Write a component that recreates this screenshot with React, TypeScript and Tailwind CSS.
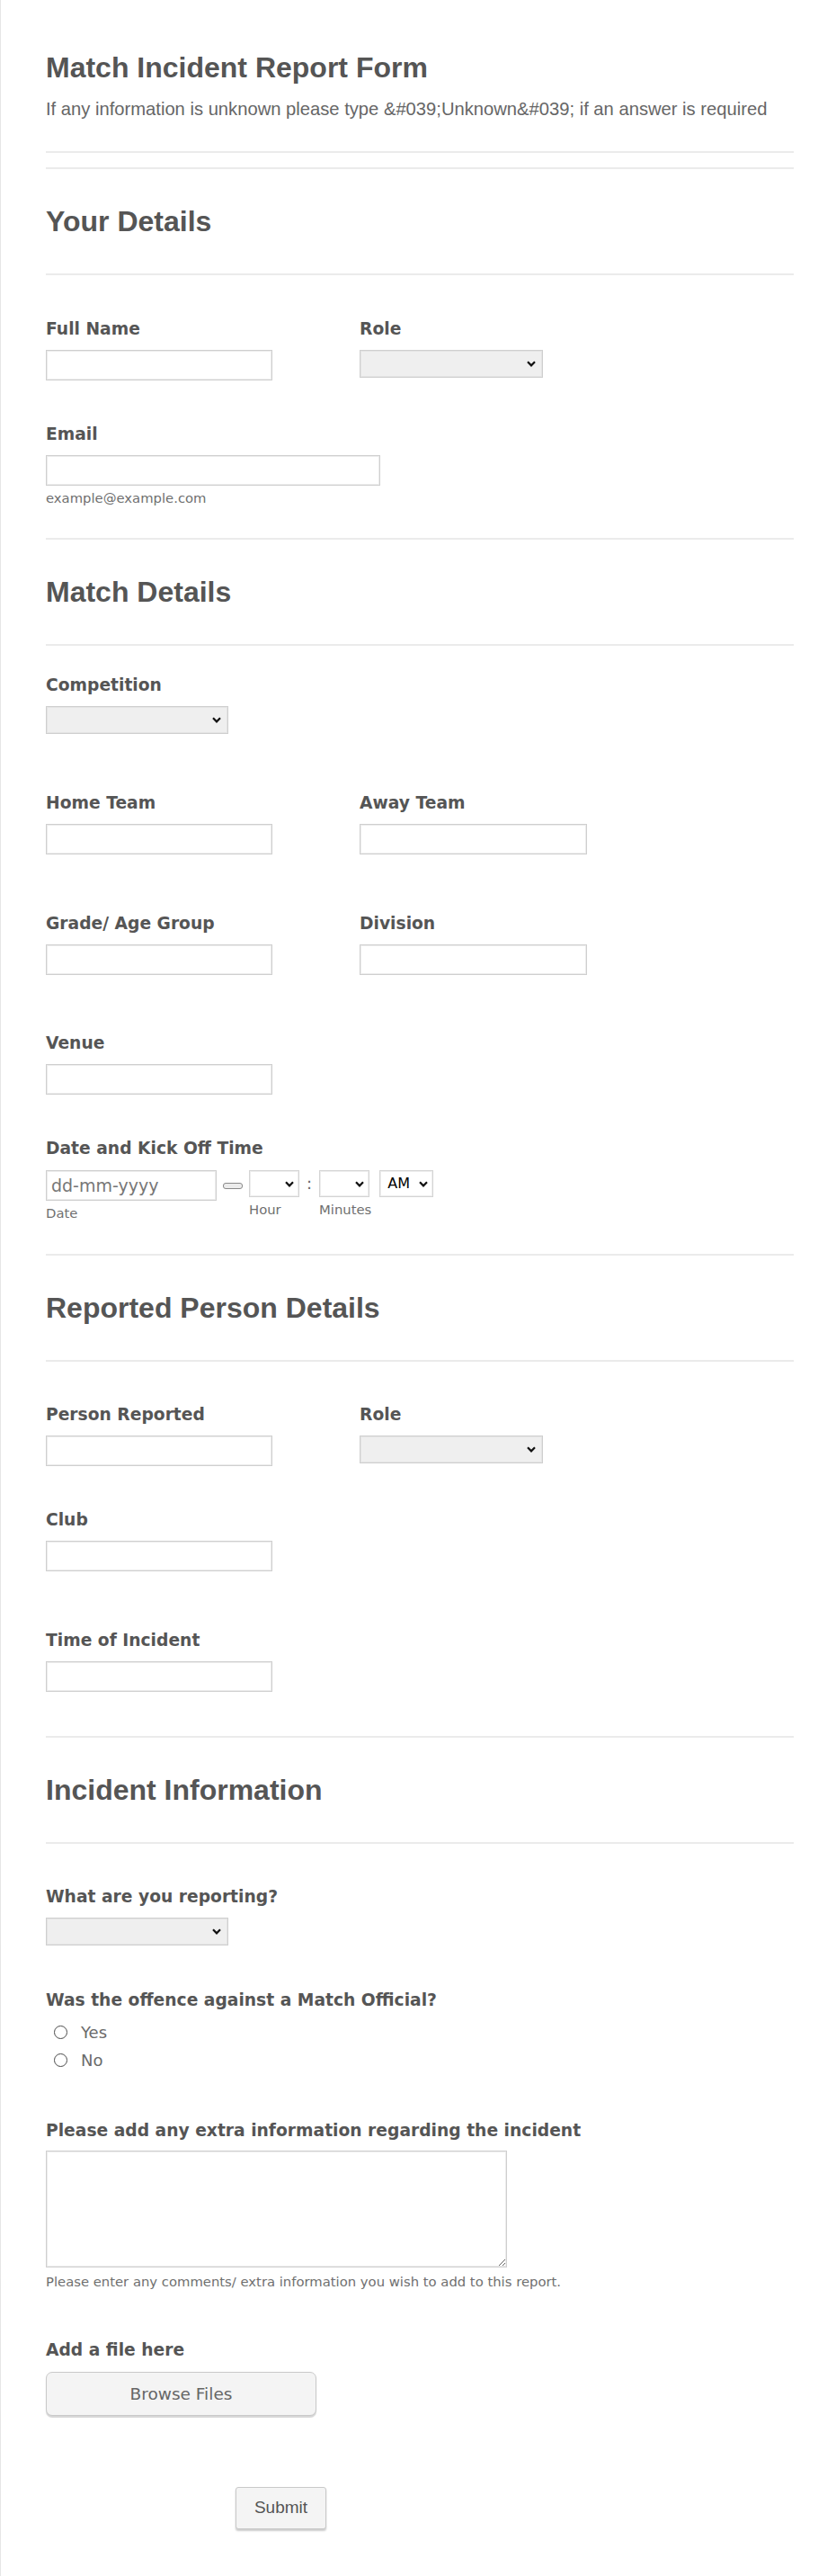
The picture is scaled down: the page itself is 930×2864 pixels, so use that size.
import React from "react";

const HEAD =
  "font-['Liberation_Sans',Arial,sans-serif] font-bold text-[32px] leading-[38px] text-[#555555]";
const LABEL =
  "block font-['DejaVu_Sans',Verdana,sans-serif] font-bold text-[18.7px] leading-[22px] text-[#555555] whitespace-nowrap";
const SUB =
  "block font-['DejaVu_Sans',Verdana,sans-serif] text-[14.8px] leading-[18px] text-[#6f6f6f] whitespace-nowrap";
const INPUT =
  "block h-[34px] border border-[#cfcfcf] shadow-[inset_0_0_0_1px_#ececec] bg-white outline-none";

function Chevron() {
  return (
    <svg width="10" height="7" viewBox="0 0 10 7" className="block">
      <path d="M1 1.2 L5 5.3 L9 1.2" fill="none" stroke="#111111" strokeWidth="2.2" />
    </svg>
  );
}

function GraySelect({ width }: { width: string }) {
  return (
    <div className={"relative h-[31px] " + width}>
      <select className="appearance-none block w-full h-full border border-[#cfcfcf] shadow-[inset_0_0_0_1px_#e4e4e4] bg-[#efefef] outline-none">
        <option value=""></option>
      </select>
      <div className="absolute right-[8px] top-[12px] pointer-events-none">
        <Chevron />
      </div>
    </div>
  );
}

function TimeSelect({ width, text }: { width: string; text?: string }) {
  return (
    <div className={"relative h-[30px] " + width}>
      <div className="h-full border border-[#d4d4d4] shadow-[inset_0_0_0_1px_#eeeeee] bg-white flex items-center pl-[8px] font-['DejaVu_Sans',Verdana,sans-serif] text-[16px] text-black">
        {text}
      </div>
      <div className="absolute right-[6px] top-[12px] pointer-events-none">
        <Chevron />
      </div>
    </div>
  );
}

function Hr({ className }: { className?: string }) {
  return <div className={"h-[2px] bg-[#ebebeb] " + (className ?? "")} />;
}

function Section({ title, topMargin }: { title: string; topMargin: string }) {
  return (
    <div className={topMargin}>
      <Hr />
      <h2 className={HEAD + " mt-[39px]"}>{title}</h2>
      <Hr className="mt-[39px]" />
    </div>
  );
}

function TextField({ label, mt, width }: { label: string; mt: string; width?: string }) {
  return (
    <div className={mt}>
      <label className={LABEL}>{label}</label>
      <input type="text" className={INPUT + " mt-[12px] " + (width ?? "w-[252px]")} />
    </div>
  );
}

export default function App() {
  return (
    <div className="min-h-[2864px] bg-white border-l border-[#e6e6e6]">
      <div className="w-[832px] ml-[50px] pt-[56px] pb-[51px]">
        <h1 className={HEAD}>Match Incident Report Form</h1>
        <p className="mt-[15px] font-['Liberation_Sans',Arial,sans-serif] text-[20.2px] leading-[24px] text-[#666666] whitespace-nowrap">
          If any information is unknown please type &amp;#039;Unknown&amp;#039; if an answer is required
        </p>
        <Hr className="mt-[35px]" />

        <Section title="Your Details" topMargin="mt-[16px]" />

        <div className="mt-[49px] flex">
          <div className="w-[349px]">
            <label className={LABEL}>Full Name</label>
            <input type="text" className={INPUT + " mt-[12px] w-[252px]"} />
          </div>
          <div>
            <label className={LABEL}>Role</label>
            <div className="mt-[12px]">
              <GraySelect width="w-[204px]" />
            </div>
          </div>
        </div>

        <div className="mt-[49px]">
          <label className={LABEL}>Email</label>
          <input type="email" className={INPUT + " mt-[12px] w-[372px]"} />
          <span className={SUB + " mt-[5px]"}>example@example.com</span>
        </div>

        <Section title="Match Details" topMargin="mt-[35px]" />

        <div className="mt-[33px]">
          <label className={LABEL}>Competition</label>
          <div className="mt-[12px]">
            <GraySelect width="w-[203px]" />
          </div>
        </div>

        <div className="mt-[66px] flex">
          <div className="w-[349px]">
            <label className={LABEL}>Home Team</label>
            <input type="text" className={INPUT + " mt-[12px] w-[252px]"} />
          </div>
          <div>
            <label className={LABEL}>Away Team</label>
            <input type="text" className={INPUT + " mt-[12px] w-[253px]"} />
          </div>
        </div>

        <div className="mt-[66px] flex">
          <div className="w-[349px]">
            <label className={LABEL}>Grade/ Age Group</label>
            <input type="text" className={INPUT + " mt-[12px] w-[252px]"} />
          </div>
          <div>
            <label className={LABEL}>Division</label>
            <input type="text" className={INPUT + " mt-[12px] w-[253px]"} />
          </div>
        </div>

        <TextField label="Venue" mt="mt-[65px]" />

        <div className="mt-[49px]">
          <label className={LABEL}>Date and Kick Off Time</label>
          <div className="mt-[13px] flex items-start">
            <div>
              <input
                type="text"
                placeholder="dd-mm-yyyy"
                className={
                  INPUT +
                  " w-[190px] pl-[5px] font-['DejaVu_Sans',Verdana,sans-serif] text-[19px] text-[#555] placeholder:text-[#777777]"
                }
              />
              <span className={SUB + " mt-[5px]"}>Date</span>
            </div>
            <div className="ml-[7px] mt-[14px] w-[22px] h-[7px] rounded-[3px] border border-[#8a8a8a] bg-[#ececec]" />
            <div className="ml-[7px]">
              <TimeSelect width="w-[56px]" />
              <span className={SUB + " mt-[5px]"}>Hour</span>
            </div>
            <div className="w-[22px] text-center font-['DejaVu_Sans',Verdana,sans-serif] text-[18px] leading-[30px] text-[#666]">
              :
            </div>
            <div>
              <TimeSelect width="w-[56px]" />
              <span className={SUB + " mt-[5px]"}>Minutes</span>
            </div>
            <div className="ml-[9px]">
              <TimeSelect width="w-[60px]" text="AM" />
            </div>
          </div>
        </div>

        <Section title="Reported Person Details" topMargin="mt-[36px]" />

        <div className="mt-[48px] flex">
          <div className="w-[349px]">
            <label className={LABEL}>Person Reported</label>
            <input type="text" className={INPUT + " mt-[12px] w-[252px]"} />
          </div>
          <div>
            <label className={LABEL}>Role</label>
            <div className="mt-[12px]">
              <GraySelect width="w-[204px]" />
            </div>
          </div>
        </div>

        <TextField label="Club" mt="mt-[49px]" />
        <TextField label="Time of Incident" mt="mt-[66px]" />

        <Section title="Incident Information" topMargin="mt-[49px]" />

        <div className="mt-[48px]">
          <label className={LABEL}>What are you reporting?</label>
          <div className="mt-[12px]">
            <GraySelect width="w-[203px]" />
          </div>
        </div>

        <div className="mt-[50px]">
          <label className={LABEL}>Was the offence against a Match Official?</label>
          <div className="mt-[9px]">
            {["Yes", "No"].map((o) => (
              <label key={o} className="flex items-center h-[31px]">
                <input
                  type="radio"
                  name="official"
                  className="appearance-none m-0 ml-[9px] w-[15px] h-[15px] rounded-full border border-[#4a4a4a] bg-white"
                />
                <span className="ml-[15px] font-['DejaVu_Sans',Verdana,sans-serif] text-[18px] text-[#6b6b6b]">
                  {o}
                </span>
              </label>
            ))}
          </div>
        </div>

        <div className="mt-[52px]">
          <label className={LABEL}>Please add any extra information regarding the incident</label>
          <textarea className="block mt-[11px] w-[513px] h-[130px] border border-[#cfcfcf] shadow-[inset_0_0_0_1px_#ececec] bg-white resize outline-none" />
          <span className={SUB + " mt-[7px]"}>
            Please enter any comments/ extra information you wish to add to this report.
          </span>
        </div>

        <div className="mt-[56px]">
          <label className={LABEL}>Add a file here</label>
          <button
            type="button"
            className="block mt-[13px] w-[301px] h-[49px] rounded-[7px] border border-[#c9c9c9] bg-[#f4f4f4] shadow-[0_2px_1px_#d6d6d6] font-['DejaVu_Sans',Verdana,sans-serif] text-[18.5px] text-[#666666]"
          >
            Browse Files
          </button>
        </div>

        <button
          type="submit"
          className="block mt-[79px] ml-[211px] w-[101px] h-[47px] rounded-[3px] border border-[#c9c9c9] bg-[#f4f4f4] shadow-[0_2px_2px_#cccccc] font-['Liberation_Sans',Arial,sans-serif] text-[19px] text-[#555555]"
        >
          Submit
        </button>
      </div>
    </div>
  );
}
